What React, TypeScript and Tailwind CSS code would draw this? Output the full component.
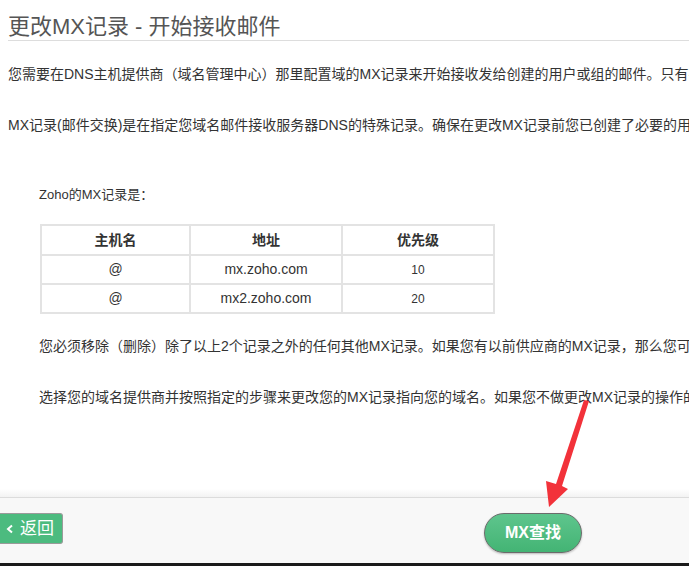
const FONT = { fontFamily: '"Liberation Sans", "Noto Sans CJK SC", sans-serif' };

const RECORDS = [
  { host: "@", addr: "mx.zoho.com", prio: "10" },
  { host: "@", addr: "mx2.zoho.com", prio: "20" },
];

export default function App() {
  return (
    <div className="relative h-[566px] w-[689px] overflow-hidden bg-white text-[#333]" style={FONT}>
      {/* Main content */}
      <div className="h-[497px] whitespace-nowrap">
        <h1 className="ml-2 border-b border-[#ddd] pt-[14px] pb-0 text-[22px] leading-[26px] font-normal text-[#555]">
          更改MX记录 - 开始接收邮件
        </h1>
        <p className="ml-2 mt-[23px] text-[14px] leading-[20px]">
          您需要在DNS主机提供商（域名管理中心）那里配置域的MX记录来开始接收发给创建的用户或组的邮件。只有在这之后邮件才能送达。
        </p>
        <p className="ml-2 mt-[31px] text-[14px] leading-[20px]">
          MX记录(邮件交换)是在指定您域名邮件接收服务器DNS的特殊记录。确保在更改MX记录前您已创建了必要的用户账户。
        </p>

        <div className="ml-[39px]">
          <p className="mt-[50px] text-[13px] leading-[20px]">Zoho的MX记录是：</p>
          <table className="mt-[19px] ml-px border-collapse text-center text-[14px]">
            <thead>
              <tr className="h-[30px]">
                <th className="w-[149px] border-2 border-[#e3e3e3] font-bold">主机名</th>
                <th className="w-[152px] border-2 border-[#e3e3e3] font-bold">地址</th>
                <th className="w-[152px] border-2 border-[#e3e3e3] font-bold">优先级</th>
              </tr>
            </thead>
            <tbody>
              {RECORDS.map((r) => (
                <tr key={r.addr} className="h-[29px]">
                  <td className="border-2 border-[#e3e3e3]">{r.host}</td>
                  <td className="border-2 border-[#e3e3e3]">{r.addr}</td>
                  <td className="border-2 border-[#e3e3e3] text-[12px]">{r.prio}</td>
                </tr>
              ))}
            </tbody>
          </table>
          <p className="mt-[22px] text-[14px] leading-[20px]">
            您必须移除（删除）除了以上2个记录之外的任何其他MX记录。如果您有以前供应商的MX记录，那么您可以将其删除。
          </p>
          <p className="mt-[31px] text-[14px] leading-[20px]">
            选择您的域名提供商并按照指定的步骤来更改您的MX记录指向您的域名。如果您不做更改MX记录的操作的话。
          </p>
        </div>
      </div>

      {/* Footer */}
      <div className="relative h-[66px] border-t border-[#dcdcdc] bg-[#f8f8f8]">
        <div className="pointer-events-none absolute -top-[9px] left-0 h-[8px] w-full bg-gradient-to-b from-white to-[#f3f3f3]" />
        <div className="flex h-full items-start">
          <button className="mt-[15px] flex h-[31px] w-[63px] items-center gap-[6px] rounded-r-[3px] border border-l-0 border-[#9a9a9a] bg-[#4cbb7f] pl-[6px] text-[17px] text-white">
            <svg width="8" height="10" viewBox="0 0 8 10" className="mt-px">
              <path d="M6 1.5 L2 5 L6 8.5" fill="none" stroke="white" strokeWidth="2" />
            </svg>
            <span>返回</span>
          </button>
          <button className="ml-[421px] mt-[15px] h-[40px] w-[98px] rounded-full border border-[#6b6b6b] bg-gradient-to-b from-[#5ec58d] to-[#43b474] text-[16px] font-bold text-white shadow-[0_1px_2px_rgba(0,0,0,0.25)]">
            MX查找
          </button>
        </div>
      </div>
      <div className="h-[3px] bg-[#1a1a1a]" />

      {/* Red annotation arrow */}
      <svg className="pointer-events-none absolute left-0 top-0" width="689" height="566">
        <polygon
          points="584,400 589,401 562,486 568,489 549,507 546,481 556,484"
          fill="#f2323a"
        />
      </svg>
    </div>
  );
}
